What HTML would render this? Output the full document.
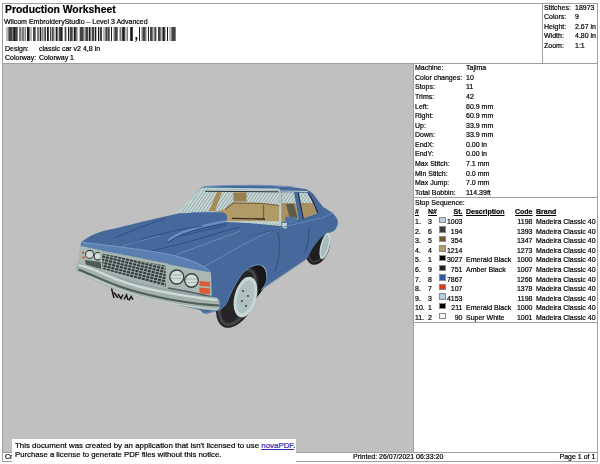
<!DOCTYPE html>
<html><head><meta charset="utf-8">
<style>
html,body{margin:0;padding:0;background:#fff;width:600px;height:464px;overflow:hidden;position:relative;font-family:"Liberation Sans",sans-serif;color:#111;}
.a{position:absolute;filter:grayscale(1);white-space:nowrap;font-size:7px;line-height:9px;color:#000;-webkit-text-stroke:0.2px #000;}
.ln{position:absolute;background:#a0a0a0;}
.r{text-align:right;}
.b{font-weight:bold;text-decoration:underline;text-underline-offset:1px;}
.sw{position:absolute;width:4.6px;height:4.6px;border:0.7px solid #8a8a8a;}
</style></head><body>
<!-- outer frame -->
<div class="ln" style="left:2px;top:3px;width:596px;height:1px"></div>
<div class="ln" style="left:2px;top:3px;width:1px;height:459px"></div>
<div class="ln" style="left:597px;top:3px;width:1px;height:459px"></div>
<div class="ln" style="left:2px;top:461px;width:596px;height:1px"></div>
<!-- header -->
<div class="a" style="left:5px;top:4px;font-size:10.4px;line-height:12px;font-weight:bold;">Production Worksheet</div>
<div class="a" style="left:4px;top:17px;">Wilcom EmbroideryStudio – Level 3 Advanced</div>
<svg style="position:absolute;left:0;top:0" width="200" height="50"><rect x="6" y="27" width="1" height="14" fill="rgb(188,188,188)"/><rect x="7" y="27" width="1" height="14" fill="rgb(188,188,188)"/><rect x="8" y="27" width="1" height="14" fill="rgb(125,125,125)"/><rect x="9" y="27" width="1" height="14" fill="rgb(68,68,68)"/><rect x="10" y="27" width="1" height="14" fill="rgb(68,68,68)"/><rect x="11" y="27" width="1" height="14" fill="rgb(68,68,68)"/><rect x="12" y="27" width="1" height="14" fill="rgb(125,125,125)"/><rect x="13" y="27" width="1" height="14" fill="rgb(68,68,68)"/><rect x="14" y="27" width="1" height="14" fill="rgb(25,25,25)"/><rect x="15" y="27" width="1" height="14" fill="rgb(68,68,68)"/><rect x="16" y="27" width="1" height="14" fill="rgb(68,68,68)"/><rect x="17" y="27" width="1" height="14" fill="rgb(125,125,125)"/><rect x="19" y="27" width="1" height="14" fill="rgb(125,125,125)"/><rect x="20" y="27" width="1" height="14" fill="rgb(125,125,125)"/><rect x="21" y="27" width="1" height="14" fill="rgb(188,188,188)"/><rect x="22" y="27" width="1" height="14" fill="rgb(125,125,125)"/><rect x="23" y="27" width="1" height="14" fill="rgb(125,125,125)"/><rect x="24" y="27" width="1" height="14" fill="rgb(188,188,188)"/><rect x="25" y="27" width="1" height="14" fill="rgb(125,125,125)"/><rect x="27" y="27" width="1" height="14" fill="rgb(25,25,25)"/><rect x="28" y="27" width="1" height="14" fill="rgb(25,25,25)"/><rect x="29" y="27" width="1" height="14" fill="rgb(125,125,125)"/><rect x="30" y="27" width="1" height="14" fill="rgb(188,188,188)"/><rect x="31" y="27" width="1" height="14" fill="rgb(188,188,188)"/><rect x="33" y="27" width="1" height="14" fill="rgb(68,68,68)"/><rect x="34" y="27" width="1" height="14" fill="rgb(68,68,68)"/><rect x="35" y="27" width="1" height="14" fill="rgb(125,125,125)"/><rect x="37" y="27" width="1" height="14" fill="rgb(125,125,125)"/><rect x="38" y="27" width="1" height="14" fill="rgb(125,125,125)"/><rect x="39" y="27" width="1" height="14" fill="rgb(188,188,188)"/><rect x="40" y="27" width="1" height="14" fill="rgb(25,25,25)"/><rect x="41" y="27" width="1" height="14" fill="rgb(188,188,188)"/><rect x="42" y="27" width="1" height="14" fill="rgb(125,125,125)"/><rect x="43" y="27" width="1" height="14" fill="rgb(188,188,188)"/><rect x="44" y="27" width="1" height="14" fill="rgb(125,125,125)"/><rect x="45" y="27" width="1" height="14" fill="rgb(68,68,68)"/><rect x="47" y="27" width="1" height="14" fill="rgb(25,25,25)"/><rect x="48" y="27" width="1" height="14" fill="rgb(68,68,68)"/><rect x="50" y="27" width="1" height="14" fill="rgb(68,68,68)"/><rect x="51" y="27" width="1" height="14" fill="rgb(188,188,188)"/><rect x="52" y="27" width="1" height="14" fill="rgb(68,68,68)"/><rect x="53" y="27" width="1" height="14" fill="rgb(125,125,125)"/><rect x="54" y="27" width="1" height="14" fill="rgb(188,188,188)"/><rect x="55" y="27" width="1" height="14" fill="rgb(188,188,188)"/><rect x="56" y="27" width="1" height="14" fill="rgb(25,25,25)"/><rect x="57" y="27" width="1" height="14" fill="rgb(125,125,125)"/><rect x="58" y="27" width="1" height="14" fill="rgb(188,188,188)"/><rect x="59" y="27" width="1" height="14" fill="rgb(68,68,68)"/><rect x="60" y="27" width="1" height="14" fill="rgb(68,68,68)"/><rect x="61" y="27" width="1" height="14" fill="rgb(25,25,25)"/><rect x="62" y="27" width="1" height="14" fill="rgb(125,125,125)"/><rect x="64" y="27" width="1" height="14" fill="rgb(188,188,188)"/><rect x="65" y="27" width="1" height="14" fill="rgb(68,68,68)"/><rect x="66" y="27" width="1" height="14" fill="rgb(188,188,188)"/><rect x="68" y="27" width="1" height="14" fill="rgb(25,25,25)"/><rect x="69" y="27" width="1" height="14" fill="rgb(188,188,188)"/><rect x="70" y="27" width="1" height="14" fill="rgb(68,68,68)"/><rect x="71" y="27" width="1" height="14" fill="rgb(68,68,68)"/><rect x="72" y="27" width="1" height="14" fill="rgb(125,125,125)"/><rect x="73" y="27" width="1" height="14" fill="rgb(188,188,188)"/><rect x="74" y="27" width="1" height="14" fill="rgb(25,25,25)"/><rect x="75" y="27" width="1" height="14" fill="rgb(68,68,68)"/><rect x="76" y="27" width="1" height="14" fill="rgb(125,125,125)"/><rect x="77" y="27" width="1" height="14" fill="rgb(188,188,188)"/><rect x="79" y="27" width="1" height="14" fill="rgb(188,188,188)"/><rect x="80" y="27" width="1" height="14" fill="rgb(68,68,68)"/><rect x="81" y="27" width="1" height="14" fill="rgb(68,68,68)"/><rect x="82" y="27" width="1" height="14" fill="rgb(68,68,68)"/><rect x="83" y="27" width="1" height="14" fill="rgb(125,125,125)"/><rect x="84" y="27" width="1" height="14" fill="rgb(188,188,188)"/><rect x="85" y="27" width="1" height="14" fill="rgb(125,125,125)"/><rect x="86" y="27" width="1" height="14" fill="rgb(68,68,68)"/><rect x="87" y="27" width="1" height="14" fill="rgb(68,68,68)"/><rect x="88" y="27" width="1" height="14" fill="rgb(188,188,188)"/><rect x="89" y="27" width="1" height="14" fill="rgb(25,25,25)"/><rect x="90" y="27" width="1" height="14" fill="rgb(125,125,125)"/><rect x="91" y="27" width="1" height="14" fill="rgb(188,188,188)"/><rect x="92" y="27" width="1" height="14" fill="rgb(68,68,68)"/><rect x="93" y="27" width="1" height="14" fill="rgb(68,68,68)"/><rect x="94" y="27" width="1" height="14" fill="rgb(188,188,188)"/><rect x="95" y="27" width="1" height="14" fill="rgb(25,25,25)"/><rect x="96" y="27" width="1" height="14" fill="rgb(188,188,188)"/><rect x="98" y="27" width="1" height="14" fill="rgb(25,25,25)"/><rect x="99" y="27" width="1" height="14" fill="rgb(188,188,188)"/><rect x="100" y="27" width="1" height="14" fill="rgb(68,68,68)"/><rect x="101" y="27" width="1" height="14" fill="rgb(68,68,68)"/><rect x="103" y="27" width="1" height="14" fill="rgb(188,188,188)"/><rect x="104" y="27" width="1" height="14" fill="rgb(188,188,188)"/><rect x="105" y="27" width="1" height="14" fill="rgb(125,125,125)"/><rect x="106" y="27" width="1" height="14" fill="rgb(68,68,68)"/><rect x="107" y="27" width="1" height="14" fill="rgb(125,125,125)"/><rect x="108" y="27" width="1" height="14" fill="rgb(68,68,68)"/><rect x="109" y="27" width="1" height="14" fill="rgb(125,125,125)"/><rect x="111" y="27" width="1" height="14" fill="rgb(25,25,25)"/><rect x="113" y="27" width="1" height="14" fill="rgb(188,188,188)"/><rect x="114" y="27" width="1" height="14" fill="rgb(125,125,125)"/><rect x="115" y="27" width="1" height="14" fill="rgb(68,68,68)"/><rect x="116" y="27" width="1" height="14" fill="rgb(68,68,68)"/><rect x="117" y="27" width="1" height="14" fill="rgb(125,125,125)"/><rect x="119" y="27" width="1" height="14" fill="rgb(188,188,188)"/><rect x="120" y="27" width="1" height="14" fill="rgb(125,125,125)"/><rect x="121" y="27" width="1" height="14" fill="rgb(188,188,188)"/><rect x="122" y="27" width="1" height="14" fill="rgb(68,68,68)"/><rect x="123" y="27" width="1" height="14" fill="rgb(25,25,25)"/><rect x="124" y="27" width="1" height="14" fill="rgb(68,68,68)"/><rect x="125" y="27" width="1" height="14" fill="rgb(188,188,188)"/><rect x="126" y="27" width="1" height="14" fill="rgb(188,188,188)"/><rect x="127" y="27" width="1" height="14" fill="rgb(125,125,125)"/><rect x="130" y="27" width="1" height="14" fill="rgb(68,68,68)"/><rect x="131" y="27" width="1" height="14" fill="rgb(25,25,25)"/><rect x="132" y="27" width="1" height="14" fill="rgb(68,68,68)"/><rect x="139" y="27" width="1" height="14" fill="rgb(25,25,25)"/><rect x="141" y="27" width="1" height="14" fill="rgb(188,188,188)"/><rect x="142" y="27" width="1" height="14" fill="rgb(125,125,125)"/><rect x="143" y="27" width="1" height="14" fill="rgb(68,68,68)"/><rect x="144" y="27" width="1" height="14" fill="rgb(68,68,68)"/><rect x="145" y="27" width="1" height="14" fill="rgb(125,125,125)"/><rect x="146" y="27" width="1" height="14" fill="rgb(188,188,188)"/><rect x="148" y="27" width="1" height="14" fill="rgb(25,25,25)"/><rect x="150" y="27" width="1" height="14" fill="rgb(68,68,68)"/><rect x="151" y="27" width="1" height="14" fill="rgb(68,68,68)"/><rect x="152" y="27" width="1" height="14" fill="rgb(125,125,125)"/><rect x="153" y="27" width="1" height="14" fill="rgb(188,188,188)"/><rect x="154" y="27" width="1" height="14" fill="rgb(125,125,125)"/><rect x="155" y="27" width="1" height="14" fill="rgb(68,68,68)"/><rect x="156" y="27" width="1" height="14" fill="rgb(188,188,188)"/><rect x="158" y="27" width="1" height="14" fill="rgb(68,68,68)"/><rect x="159" y="27" width="1" height="14" fill="rgb(68,68,68)"/><rect x="160" y="27" width="1" height="14" fill="rgb(125,125,125)"/><rect x="161" y="27" width="1" height="14" fill="rgb(188,188,188)"/><rect x="162" y="27" width="1" height="14" fill="rgb(125,125,125)"/><rect x="163" y="27" width="1" height="14" fill="rgb(25,25,25)"/><rect x="164" y="27" width="1" height="14" fill="rgb(68,68,68)"/><rect x="165" y="27" width="1" height="14" fill="rgb(188,188,188)"/><rect x="167" y="27" width="1" height="14" fill="rgb(25,25,25)"/><rect x="169" y="27" width="1" height="14" fill="rgb(188,188,188)"/><rect x="170" y="27" width="1" height="14" fill="rgb(188,188,188)"/><rect x="171" y="27" width="1" height="14" fill="rgb(125,125,125)"/><rect x="172" y="27" width="1" height="14" fill="rgb(68,68,68)"/><rect x="173" y="27" width="1" height="14" fill="rgb(68,68,68)"/><rect x="174" y="27" width="1" height="14" fill="rgb(68,68,68)"/><rect x="175" y="27" width="1" height="14" fill="rgb(125,125,125)"/><path d="M135.5 37h1.8v1.6c0 1.6-.6 2.8-1.8 3.4l-.4-.6c.7-.4 1-1 1-1.6h-.6z" fill="#111"/></svg>
<div class="a" style="left:5px;top:44px;">Design:</div>
<div class="a" style="left:39px;top:44px;">classic car v2 4,8 in</div>
<div class="a" style="left:5px;top:53px;">Colorway:</div>
<div class="a" style="left:39px;top:53px;">Colorway 1</div>
<div class="ln" style="left:542px;top:3px;width:1px;height:60px"></div>
<div class="ln" style="left:2px;top:63px;width:596px;height:1px"></div>
<div class="a" style="left:544px;top:3px;">Stitches:</div><div class="a" style="left:575px;top:3px;">18973</div>
<div class="a" style="left:544px;top:12px;">Colors:</div><div class="a" style="left:575px;top:12px;">9</div>
<div class="a" style="left:544px;top:22px;">Height:</div><div class="a" style="left:575px;top:22px;">2.67 in</div>
<div class="a" style="left:544px;top:31px;">Width:</div><div class="a" style="left:575px;top:31px;">4.80 in</div>
<div class="a" style="left:544px;top:41px;">Zoom:</div><div class="a" style="left:575px;top:41px;">1:1</div>
<!-- gray design area -->
<div style="position:absolute;left:3px;top:64px;width:410px;height:388px;background:#c0c0c0;"></div>
<!--CAR--><svg style="position:absolute;left:0;top:0" width="413" height="452" viewBox="0 0 413 452">
<defs>
<pattern id="mesh" width="2.6" height="2.6" patternUnits="userSpaceOnUse" patternTransform="rotate(35)">
<rect width="2.6" height="2.6" fill="#cad9d6"/><rect width="0.9" height="2.6" fill="#90a6a8"/>
</pattern>
<pattern id="grl" width="4" height="3" patternUnits="userSpaceOnUse" patternTransform="rotate(14)">
<rect width="4" height="3" fill="#98a6a2"/><rect x="1" y="1" width="3" height="2" fill="#2e3638"/>
</pattern>
</defs>
<!-- rear tire -->
<ellipse cx="318" cy="248" rx="11" ry="17.5" transform="rotate(22 318 248)" fill="#1e1e20"/><ellipse cx="318" cy="248" rx="8" ry="14.5" transform="rotate(22 318 248)" fill="none" stroke="#3c3c3e" stroke-width="1.5"/>
<!-- front tire & well -->
<path fill="#18181a" d="M236,292 C240,276 250,265 259,264.5 C265,266 267,272 267,284 L255,300 Z"/>
<ellipse cx="237.5" cy="297" rx="18" ry="33" transform="rotate(25 237.5 297)" fill="#252527"/>
<ellipse cx="237.5" cy="297" rx="14.5" ry="29.5" transform="rotate(25 237.5 297)" fill="none" stroke="#454547" stroke-width="3"/>
<!-- body silhouette -->
<path fill="#46689a" d="M81,242.5 C88,236 100,231 115,228.5 C130,225 150,219.5 165,216.5 L178,213.5 L202,187 C230,184.5 270,185 294.4,187.4 C300,188 305,188.5 307,189.4 C310,191 312,192.5 313.8,194.7 L319.6,202.4 L323.4,207.3 C328,210 333,212.5 336,217 C339,221 338.5,226.5 334,231 L329,233 C322,235 314,244 307,259 L261,290 C265,286 267.5,280 267,273 C266.5,268 263,264.5 259,264.5 C252,264 244,270 239,278 C234,285 231,293 228,300 C226,305 222,309.5 217.2,310.7 L207,313.7 L203.4,313.3 L200,310 L134,295 L77,270 L78,264 L82,262 L80.5,247 Z"/>
<!-- windshield glass -->
<path fill="url(#mesh)" d="M178,213 L203,188.5 L279,190.5 L280.5,226 L226,221 Z"/>
<!-- side windows -->
<path fill="url(#mesh)" d="M281.3,192.3 L294.5,192.3 L299,219 L281.3,222 Z"/>
<path fill="url(#mesh)" d="M298.3,192.8 L308,192.8 L317.6,213 L304,218 Z"/>
<!-- interior -->
<path fill="#a88c58" d="M217,192 L222,192 L215,211 L209,211 Z"/>
<path fill="#9a8050" d="M233.5,192.5 L246.5,192.5 L246.5,201.5 L233.5,201.5 Z"/>
<path fill="#b09a68" d="M210,213 L225,209 L233,202.5 L262,203 L279,205 L279.5,221 L226,221 Z"/>
<path fill="none" stroke="#7a6238" stroke-width="1.2" d="M263.5,205 L263.5,220 M225,209.5 L233,203 L262,203.5 L279,205.5"/>
<path fill="none" stroke="#3a3020" stroke-width="1.3" d="M232,218.3 L265,219"/>
<path fill="none" stroke="#c4d4cc" stroke-width="1.2" d="M226,221.5 L279.5,223"/>
<path fill="#a89060" d="M281.3,203 L295.5,203 L299,219 L281.3,222 Z"/>
<path fill="#5e5a48" d="M286,204 L294,204 L297.5,218 L290,219 Z"/>
<path fill="#a89060" d="M300,203 L312.5,203 L317.6,213 L304,218 Z"/>
<!-- window frames -->
<path fill="none" stroke="#b8d0cc" stroke-width="1.8" d="M177,213.5 L202.5,188.3 L278.5,189.5 C279.5,190 280,191 280,192 L280.5,226"/>
<path fill="none" stroke="#b8d0cc" stroke-width="1.2" d="M281,191 L308,191.5"/>
<path fill="none" stroke="#2c343c" stroke-width="1" d="M205,191.3 L278.5,191.8"/>
<path fill="#46689a" d="M294,192.3 L297.8,192.3 L303,219 L298.7,219 Z"/>
<path fill="none" stroke="#1e2a36" stroke-width="1" d="M298.3,192.5 L303.3,219"/>
<path fill="none" stroke="#1e2a36" stroke-width="1.2" d="M308,193 C311,197 315,205 317.6,213"/>
<!-- roof highlight -->
<path fill="none" stroke="#6a8cba" stroke-width="1" d="M204,186.5 C240,184.8 275,185 294,187"/>
<!-- mirror -->
<path fill="#4e72a4" d="M285,217 L296,216.5 L297,222.5 L286,223.5 Z"/>
<path fill="#c8d8d4" d="M282,223 L287,223 L286.5,228.5 L282.5,228 Z"/>
<!-- hood bulge -->
<path fill="#46689a" d="M178,213.5 L200,212.3 C210,212 220,212 224,212.8 C227.5,214 228,220 225.5,222.3 C212,224.5 195,227.5 182,232.5 L165,240 L160,225 Z"/>
<path fill="none" stroke="#5f82b4" stroke-width="1" d="M192,212.6 C205,212.2 218,212.2 224,213"/>
<path fill="none" stroke="#2e4f80" stroke-width="1.2" d="M226,223.5 C212,226 195,229.5 182,234.5 C176,237 172,239.5 168,242.5"/>
<path fill="none" stroke="#6e92c2" stroke-width="2" d="M226.5,221 C212,223.5 195,228 182,232.5 C176,235 172,237.5 168,240.5"/>
<!-- hood creases -->
<path fill="none" stroke="#2f5186" stroke-width="1.1" d="M115,237.5 C135,230 150,223 165,218.75 M127.5,245 C145,238 160,234 172.5,231.25 C185,228.5 195,227 202.5,226.25 M135,256 C155,250 175,245 190,241.25 C210,236 225,230 240,227.5 M182,236 C200,231 215,228 226,225.5"/>
<path fill="none" stroke="#6488b8" stroke-width="1" d="M165,258.75 C190,250 215,240 240,231.25 M120,247 C140,241 150,238 160,236"/>
<path fill="none" stroke="#6488b8" stroke-width="1" d="M203.3,267 C220,258 235,249 246.7,243 C260,236 272,230 281.3,227.5 C295,224 310,220.5 321.5,218 C326,216.5 330,214.5 333,212.5"/>
<path fill="none" stroke="#34568a" stroke-width="1" d="M246.7,236.7 C258,234 270,231 280,229"/>
<!-- hood front lip -->
<path fill="#5a80b2" d="M81.3,242 C95,243 110,245.5 128,247.8 C145,250 160,252.5 178,256 C195,260 205,266 211,272 L211,275 C195,270 185,267 178,266 C160,262 145,259 128,255.3 C115,253 105,251 101.3,250.3 L81.3,246 Z"/>
<path fill="none" stroke="#7898c8" stroke-width="1" d="M82,242.5 C100,244 120,247 150,251 C175,255 195,260 210,271"/>
<!-- fascia base -->
<path fill="#9eaeaa" d="M80.5,246 L101.3,250.3 C115,253 128,255.3 145,259 C160,262 178,266 195,270 L211,274 L211.5,297 L184,293.3 C167.3,290 150.7,286.5 134,283 C117,277 106.3,272 95.5,267.5 C85,264 81,263 78,263.3 Z"/>
<!-- left headlight housing -->
<path fill="#a8b8b2" d="M80.5,246 L101.5,250.5 L103,270 L78,264 Z"/>
<path fill="#505a58" d="M85,260 L101,262 L102,269 L86,266 Z"/>
<circle cx="89.6" cy="254.4" r="4" fill="#d0dcd8" stroke="#3a4242" stroke-width="1.1"/>
<circle cx="97.9" cy="256.2" r="3.7" fill="#d0dcd8" stroke="#3a4242" stroke-width="1.1"/>
<circle cx="83.2" cy="252.8" r="1.3" fill="#e05a3a"/><circle cx="83.6" cy="257.5" r="1.3" fill="#e05a3a"/>
<!-- grille -->
<path fill="#a8b8b2" d="M99.7,251.5 L167.5,263.5 L169.5,289 L101.5,271 Z"/>
<path fill="url(#grl)" d="M102,253.5 L165.5,265.8 L166,287 L102.5,269 Z"/>
<!-- right headlight housing -->
<path fill="#a8b8b2" d="M167,264.5 L211,272.5 L211.5,296 L168,287 Z"/>
<circle cx="176.8" cy="277" r="7" fill="#d0dcd8" stroke="#3a4242" stroke-width="1.4"/><path d="M171,275h11M171.5,278.5h10" stroke="#9aa8a6" stroke-width="0.8"/>
<circle cx="191.5" cy="280.5" r="6.8" fill="#d0dcd8" stroke="#3a4242" stroke-width="1.4"/><path d="M186,279h11M186.5,282.5h10" stroke="#9aa8a6" stroke-width="0.8"/>
<path fill="#e05a3a" d="M199.5,281 L210,282 L210,286.7 L199.5,285.7 Z M199.5,287.5 L210,288.5 L210,294.2 L199.5,293.2 Z"/>
<path fill="none" stroke="#55605e" stroke-width="1.6" d="M168,288 C185,291 200,294 211,296.5"/>
<!-- bumper -->
<path fill="#a2b2ac" d="M78,263.3 C81,263 85,264 95.5,267.5 C106.3,272 117,277 134,283 C150.7,286.5 167.3,290 184,293.3 C200.7,296 212,297 216.5,297.5 C220.5,298.5 221,309 217.5,310.8 C210,310.5 200.7,309.5 184,306.5 C167.3,303.3 150.7,299.5 134,296 C117,290.5 106.3,286 95.5,281 C84.8,276.5 80,274 77,271.5 C75.5,269 75.5,264.5 78,263.3 Z"/>
<path fill="none" stroke="#d2dedb" stroke-width="2" d="M78.5,265.3 C84,266 95,270 106,275 C117,280 130,285 150,289.3 C175,294.5 200,298.5 217,300"/>
<path fill="none" stroke="#505c58" stroke-width="2" d="M78.5,269.5 C90,274 100,279 117,285.5 C130,290.5 150,295.5 170,299.5 C190,303 205,305 219.5,305.5"/>
<path fill="none" stroke="#c6d2ce" stroke-width="1.3" d="M79,272.5 C95,279 110,286 130,293.5 C150,299.5 180,306 217,309.3"/>
<!-- plate text -->
<path fill="none" stroke="#1a1a1a" stroke-width="1.5" d="M111.5,288.5 L114,298 M114,292.5 L118,298 M118,294 L121,298.5 L123,294.5 M124,299.5 L126.5,295 L128,300 M129,300.5 L131,296.5 L133,299.5"/>
<!-- fender arch edge highlight -->
<path fill="none" stroke="#6486b6" stroke-width="1" d="M204,313.3 L217,310.5 C222,309.5 226,305 228,300 C230.5,293 234,286 239,278.5 C244,270 252,264.5 259,264.8 C264,266 267,270 267,276 C267,282 265,286 261,290"/>
<!-- body sill -->
<path fill="none" stroke="#8898a8" stroke-width="1" d="M261.5,289.5 L306.5,259"/>
<!-- front hubcap -->
<ellipse cx="245.5" cy="297" rx="11" ry="20.8" transform="rotate(15 245.5 297)" fill="#c8d8d6"/>
<ellipse cx="245.5" cy="297" rx="8.2" ry="17" transform="rotate(15 245.5 297)" fill="#aec2c0"/>
<circle cx="243" cy="291" r="0.9" fill="#333"/><circle cx="248" cy="296" r="0.9" fill="#333"/><circle cx="242" cy="301" r="0.9" fill="#333"/><circle cx="246" cy="306" r="0.9" fill="#333"/>
<!-- rear hubcap -->
<ellipse cx="325" cy="246" rx="4.6" ry="13.6" transform="rotate(14 325 246)" fill="#c4d6d4"/><ellipse cx="325" cy="246" rx="2.8" ry="11.2" transform="rotate(14 325 246)" fill="#a6bcbc"/>
<!-- door lines -->
<path fill="none" stroke="#30507c" stroke-width="1" d="M278,232 C281,245 279,260 275,270.7 M309.4,226.6 C309,236 308,247 304.2,253.8"/>
</svg>
<!--/CAR-->
<div class="ln" style="left:413px;top:63px;width:1px;height:389px"></div>
<div class="ln" style="left:2px;top:452px;width:596px;height:1px"></div>
<!-- machine panel -->
<div class="a" style="left:415px;top:63.30px;">Machine:</div><div class="a" style="left:466px;top:63.30px;">Tajima</div>
<div class="a" style="left:415px;top:72.87px;">Color changes:</div><div class="a" style="left:466px;top:72.87px;">10</div>
<div class="a" style="left:415px;top:82.44px;">Stops:</div><div class="a" style="left:466px;top:82.44px;">11</div>
<div class="a" style="left:415px;top:92.01px;">Trims:</div><div class="a" style="left:466px;top:92.01px;">42</div>
<div class="a" style="left:415px;top:101.58px;">Left:</div><div class="a" style="left:466px;top:101.58px;">60.9 mm</div>
<div class="a" style="left:415px;top:111.15px;">Right:</div><div class="a" style="left:466px;top:111.15px;">60.9 mm</div>
<div class="a" style="left:415px;top:120.72px;">Up:</div><div class="a" style="left:466px;top:120.72px;">33.9 mm</div>
<div class="a" style="left:415px;top:130.29px;">Down:</div><div class="a" style="left:466px;top:130.29px;">33.9 mm</div>
<div class="a" style="left:415px;top:139.86px;">EndX:</div><div class="a" style="left:466px;top:139.86px;">0.00 in</div>
<div class="a" style="left:415px;top:149.43px;">EndY:</div><div class="a" style="left:466px;top:149.43px;">0.00 in</div>
<div class="a" style="left:415px;top:159.00px;">Max Stitch:</div><div class="a" style="left:466px;top:159.00px;">7.1 mm</div>
<div class="a" style="left:415px;top:168.57px;">Min Stitch:</div><div class="a" style="left:466px;top:168.57px;">0.0 mm</div>
<div class="a" style="left:415px;top:178.14px;">Max Jump:</div><div class="a" style="left:466px;top:178.14px;">7.0 mm</div>
<div class="a" style="left:415px;top:187.71px;">Total Bobbin:</div><div class="a" style="left:466px;top:187.71px;">114.39ft</div>
<div class="a" style="left:415px;top:198px;">Stop Sequence:</div>
<div class="a b" style="left:415px;top:206.5px;">#</div><div class="a b" style="left:428px;top:206.5px;">N#</div><div class="a b r" style="left:440px;width:22.5px;top:206.5px;">St.</div><div class="a b" style="left:466px;top:206.5px;">Description</div><div class="a b" style="left:515px;top:206.5px;">Code</div><div class="a b" style="left:536px;top:206.5px;">Brand</div>
<div class="a" style="left:415px;top:217.0px;">1.</div><div class="a" style="left:428px;top:217.0px;">3</div><div class="sw" style="left:439px;top:216.5px;background:#b8cce4"></div><div class="a r" style="left:440px;width:22.5px;top:217.0px;">1003</div><div class="a" style="left:466px;top:217.0px;"></div><div class="a r" style="left:500px;width:32.5px;top:217.0px;">1198</div><div class="a" style="left:536px;top:217.0px;">Madeira Classic 40</div>
<div class="a" style="left:415px;top:226.6px;">2.</div><div class="a" style="left:428px;top:226.6px;">6</div><div class="sw" style="left:439px;top:226.1px;background:#3d3d35"></div><div class="a r" style="left:440px;width:22.5px;top:226.6px;">194</div><div class="a" style="left:466px;top:226.6px;"></div><div class="a r" style="left:500px;width:32.5px;top:226.6px;">1393</div><div class="a" style="left:536px;top:226.6px;">Madeira Classic 40</div>
<div class="a" style="left:415px;top:236.2px;">3.</div><div class="a" style="left:428px;top:236.2px;">5</div><div class="sw" style="left:439px;top:235.7px;background:#7a5a30"></div><div class="a r" style="left:440px;width:22.5px;top:236.2px;">354</div><div class="a" style="left:466px;top:236.2px;"></div><div class="a r" style="left:500px;width:32.5px;top:236.2px;">1347</div><div class="a" style="left:536px;top:236.2px;">Madeira Classic 40</div>
<div class="a" style="left:415px;top:245.8px;">4.</div><div class="a" style="left:428px;top:245.8px;">4</div><div class="sw" style="left:439px;top:245.3px;background:#b89a6a"></div><div class="a r" style="left:440px;width:22.5px;top:245.8px;">1214</div><div class="a" style="left:466px;top:245.8px;"></div><div class="a r" style="left:500px;width:32.5px;top:245.8px;">1273</div><div class="a" style="left:536px;top:245.8px;">Madeira Classic 40</div>
<div class="a" style="left:415px;top:255.4px;">5.</div><div class="a" style="left:428px;top:255.4px;">1</div><div class="sw" style="left:439px;top:254.9px;background:#000000"></div><div class="a r" style="left:440px;width:22.5px;top:255.4px;">3027</div><div class="a" style="left:466px;top:255.4px;">Emerald Black</div><div class="a r" style="left:500px;width:32.5px;top:255.4px;">1000</div><div class="a" style="left:536px;top:255.4px;">Madeira Classic 40</div>
<div class="a" style="left:415px;top:265.0px;">6.</div><div class="a" style="left:428px;top:265.0px;">9</div><div class="sw" style="left:439px;top:264.5px;background:#1e1e1e"></div><div class="a r" style="left:440px;width:22.5px;top:265.0px;">751</div><div class="a" style="left:466px;top:265.0px;">Amber Black</div><div class="a r" style="left:500px;width:32.5px;top:265.0px;">1007</div><div class="a" style="left:536px;top:265.0px;">Madeira Classic 40</div>
<div class="a" style="left:415px;top:274.6px;">7.</div><div class="a" style="left:428px;top:274.6px;">8</div><div class="sw" style="left:439px;top:274.1px;background:#2e5aa0"></div><div class="a r" style="left:440px;width:22.5px;top:274.6px;">7867</div><div class="a" style="left:466px;top:274.6px;"></div><div class="a r" style="left:500px;width:32.5px;top:274.6px;">1266</div><div class="a" style="left:536px;top:274.6px;">Madeira Classic 40</div>
<div class="a" style="left:415px;top:284.2px;">8.</div><div class="a" style="left:428px;top:284.2px;">7</div><div class="sw" style="left:439px;top:283.7px;background:#e03020"></div><div class="a r" style="left:440px;width:22.5px;top:284.2px;">107</div><div class="a" style="left:466px;top:284.2px;"></div><div class="a r" style="left:500px;width:32.5px;top:284.2px;">1378</div><div class="a" style="left:536px;top:284.2px;">Madeira Classic 40</div>
<div class="a" style="left:415px;top:293.8px;">9.</div><div class="a" style="left:428px;top:293.8px;">3</div><div class="sw" style="left:439px;top:293.3px;background:#b8cce4"></div><div class="a r" style="left:440px;width:22.5px;top:293.8px;">4153</div><div class="a" style="left:466px;top:293.8px;"></div><div class="a r" style="left:500px;width:32.5px;top:293.8px;">1198</div><div class="a" style="left:536px;top:293.8px;">Madeira Classic 40</div>
<div class="a" style="left:415px;top:303.4px;">10.</div><div class="a" style="left:428px;top:303.4px;">1</div><div class="sw" style="left:439px;top:302.9px;background:#000000"></div><div class="a r" style="left:440px;width:22.5px;top:303.4px;">211</div><div class="a" style="left:466px;top:303.4px;">Emerald Black</div><div class="a r" style="left:500px;width:32.5px;top:303.4px;">1000</div><div class="a" style="left:536px;top:303.4px;">Madeira Classic 40</div>
<div class="a" style="left:415px;top:313.0px;">11.</div><div class="a" style="left:428px;top:313.0px;">2</div><div class="sw" style="left:439px;top:312.5px;background:#f4f4fa"></div><div class="a r" style="left:440px;width:22.5px;top:313.0px;">90</div><div class="a" style="left:466px;top:313.0px;">Super White</div><div class="a r" style="left:500px;width:32.5px;top:313.0px;">1001</div><div class="a" style="left:536px;top:313.0px;">Madeira Classic 40</div>
<div class="ln" style="left:413px;top:197px;width:185px;height:1px"></div>
<div class="ln" style="left:413px;top:322px;width:185px;height:1px"></div>
<!-- footer -->
<div class="a" style="left:5px;top:452px;">Cr</div>
<div class="a" style="left:353px;top:452px;">Printed: 26/07/2021 06:33:20</div>
<div class="a" style="left:559.5px;top:452px;">Page 1 of 1</div>
<!-- overlay -->
<div style="position:absolute;left:12px;top:439px;width:284px;height:25px;background:#fff;"></div>
<div class="a" style="left:15px;top:441px;font-size:7.9px;">This document was created by an application that isn't licensed to use <span style="color:#fff;-webkit-text-stroke:0">novaPDF</span>.</div><div id="nova" class="a" style="left:261.27px;top:441px;font-size:7.9px;filter:none;color:#2a2ab0;-webkit-text-stroke:0.2px #2a2ab0;text-decoration:underline;">novaPDF</div>
<div class="a" style="left:15px;top:449.5px;font-size:7.75px;">Purchase a license to generate PDF files without this notice.</div>
</body></html>
